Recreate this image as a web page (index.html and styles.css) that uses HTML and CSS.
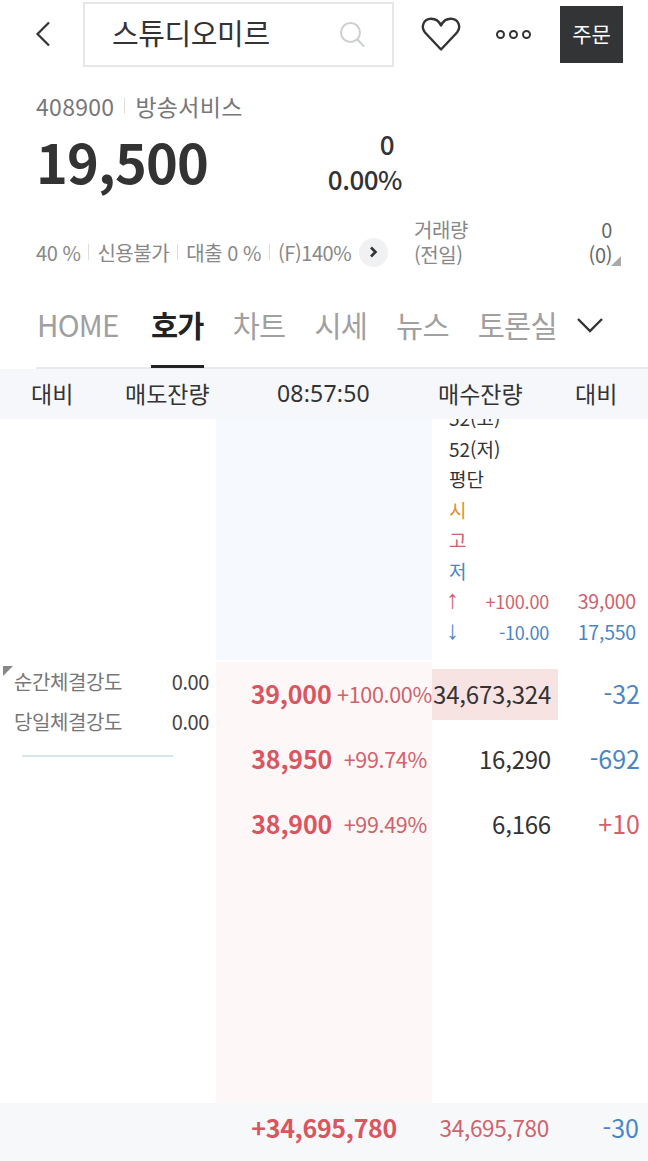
FILE: index.html

```html
<!DOCTYPE html>
<html lang="ko">
<head>
    <meta charset="UTF-8">
    <meta name="viewport" content="width=device-width, initial-scale=1.0">
    <title>스튜디오미르</title>
    <link rel="stylesheet" href="styles.css">
</head>
<body>
    <div class="top-bar">
        <svg class="back-icon" width="16" height="26" viewBox="0 0 16 26"><path d="M14 1.5 2.5 13 14 24.5" fill="none" stroke="#333" stroke-width="2.2"/></svg>
        <div class="search-box">
            <span class="search-name">스튜디오미르</span>
            <svg class="search-icon" width="28" height="28" viewBox="0 0 28 28"><circle cx="12.5" cy="12.5" r="9.5" fill="none" stroke="#ccd0d2" stroke-width="2"/><path d="m19.5 19.5 6.5 7" fill="none" stroke="#ccd0d2" stroke-width="2"/></svg>
        </div>
        <svg class="heart-icon" width="40" height="34" viewBox="0 0 40 34"><path d="M20 32.5 4 15.5C-.5 10 2.500 2 10 1.800c4.500-.1 8 2.400 10 6.700 2-4.300 5.500-6.800 10-6.700 7.500.2 10.500 8.200 6 13.700z" fill="none" stroke="#333" stroke-width="2.400" stroke-linejoin="round"/></svg>
        <div class="more-dots"><span></span><span></span><span></span></div>
        <div class="order-btn">주문</div>
    </div>

    <div class="stock-info">
        <div class="stock-code">408900<i></i>방송서비스</div>
        <div class="price-row">
            <div class="price">19,500</div>
            <div class="change">
                <div class="change-val">0</div>
                <div>0.00%</div>
            </div>
        </div>
        <div class="meta-row">
            <div class="meta-left">
                40 %<i></i>신용불가<i></i>대출 0 %<i></i>(F)140%
                <span class="meta-more"><svg width="9" height="12" viewBox="0 0 9 12"><path d="M2 1.500 6.500 6 2 10.500" fill="none" stroke="#333" stroke-width="2.600"/></svg></span>
            </div>
            <div class="volume">
                <div class="volume-row"><span>거래량</span><span class="volume-val">0</span></div>
                <div class="volume-row"><span>(전일)</span><span class="volume-val">(0)</span></div>
                <b class="volume-mark"></b>
            </div>
        </div>
    </div>

    <div class="tabs">
        <div class="tab tab-home">HOME</div>
        <div class="tab active">호가</div>
        <div class="tab">차트</div>
        <div class="tab">시세</div>
        <div class="tab">뉴스</div>
        <div class="tab">토론실</div>
        <svg class="tabs-more" width="28" height="16" viewBox="0 0 28 16"><path d="M2 2 14 14 26 2" fill="none" stroke="#333" stroke-width="2.400"/></svg>
    </div>

    <div class="book-head">
        <span class="head-a">대비</span>
        <span class="head-b">매도잔량</span>
        <span class="head-c">08:57:50</span>
        <span class="head-d">매수잔량</span>
        <span class="head-e">대비</span>
    </div>

    <div class="book-upper">
        <div></div>
        <div class="upper-mid"></div>
        <div class="upper-right">
            <div class="info-line">52(고)</div>
            <div class="info-line">52(저)</div>
            <div class="info-line">평단</div>
            <div class="info-line orange">시</div>
            <div class="info-line red">고</div>
            <div class="info-line blue">저</div>
            <div class="info-line limit red"><span class="arrow">↑</span><span class="limit-pct">+100.00</span><span class="limit-val">39,000</span></div>
            <div class="info-line limit blue"><span class="arrow">↓</span><span class="limit-pct">-10.00</span><span class="limit-val">17,550</span></div>
        </div>
    </div>

    <div class="book-lower">
        <div class="strength">
            <b class="strength-mark"></b>
            <div class="strength-row"><span>순간체결강도</span><span class="strength-val">0.00</span></div>
            <div class="strength-row"><span>당일체결강도</span><span class="strength-val">0.00</span></div>
            <div class="strength-line"></div>
        </div>
        <div class="lower-mid">
            <div class="price-line"><span class="quote">39,000</span><span class="pct pct-wide">+100.00%</span></div>
            <div class="price-line"><span class="quote">38,950</span><span class="pct">+99.74%</span></div>
            <div class="price-line"><span class="quote">38,900</span><span class="pct">+99.49%</span></div>
        </div>
        <div class="lower-right">
            <div class="qty-line"><span class="qty qty-top">34,673,324</span><span class="diff blue">-32</span></div>
            <div class="qty-line"><span class="qty">16,290</span><span class="diff blue">-692</span></div>
            <div class="qty-line"><span class="qty">6,166</span><span class="diff red">+10</span></div>
        </div>
    </div>

    <div class="book-foot">
        <span class="foot-net">+34,695,780</span>
        <span class="foot-total">34,695,780</span>
        <span class="foot-diff">-30</span>
    </div>
</body>
</html>
```

FILE: styles.css

```css
* {
    margin: 0;
    padding: 0;
    box-sizing: border-box;
    font-family: "Noto Sans CJK KR", "Noto Sans", sans-serif;
}

html, body {
    height: 1161px;
    overflow: hidden;
}

body {
    display: flex;
    flex-direction: column;
    background-color: #fff;
    color: #333;
}

.red { color: #d0626c; }
.blue { color: #4a86c5; }
.orange { color: #e0912f; }

/* top bar */
.top-bar {
    height: 68px;
    display: flex;
    align-items: center;
    padding-left: 35px;
}

.search-box {
    width: 311px;
    height: 65px;
    margin-left: 32px;
    padding: 0 26px 0 27px;
    border: 2px solid #e6e8e8;
    display: flex;
    align-items: center;
    justify-content: space-between;
}

.search-name {
    font-size: 29px;
    line-height: 40px;
    letter-spacing: -0.4px;
    color: #333;
    margin-top: -4px;
}

.heart-icon {
    margin-left: 27px;
}

.more-dots {
    display: flex;
    gap: 4px;
    margin-left: 35px;
}

.more-dots span {
    width: 9px;
    height: 9px;
    border: 2px solid #333;
    border-radius: 50%;
}

.order-btn {
    width: 63px;
    height: 57px;
    margin-left: 29px;
    padding-bottom: 3px;
    background-color: #333436;
    color: #fff;
    font-size: 21px;
    display: flex;
    align-items: center;
    justify-content: center;
}

/* stock info */
.stock-info {
    padding-left: 36px;
    height: 227px;
}

.stock-code {
    height: 38px;
    margin-top: 17px;
    padding-top: 3px;
    font-size: 23px;
    line-height: 30px;
    letter-spacing: 0.3px;
    color: #777;
    display: flex;
    align-items: center;
}

.stock-code i {
    width: 1px;
    height: 16px;
    margin: 0 10px;
    background-color: #ddd;
}

.meta-left i {
    width: 1px;
    height: 16px;
    margin: 0 8px;
    background-color: #ddd;
}

.price-row {
    height: 80px;
    margin-top: -3px;
    display: flex;
    align-items: flex-start;
}

.price {
    width: 290px;
    font-size: 54px;
    font-weight: 700;
    line-height: 72px;
    letter-spacing: -0.8px;
    margin-top: 5px;
}

.change {
    width: 78px;
    text-align: right;
    font-size: 26px;
    font-weight: 500;
    line-height: 35px;
    letter-spacing: -0.5px;
    margin-left: -2px;
    margin-top: 6px;
    white-space: nowrap;
}

.change-val {
    padding-right: 8px;
}

.meta-row {
    display: flex;
    margin-top: 16px;
}

.meta-left {
    width: 378px;
    height: 48px;
    font-size: 20px;
    letter-spacing: -0.45px;
    color: #888;
    display: flex;
    align-items: center;
    padding-top: 24px;
    white-space: nowrap;
}

.meta-more {
    width: 29px;
    height: 29px;
    margin-left: 8px;
    border-radius: 50%;
    background-color: #f0f1f3;
    display: flex;
    align-items: center;
    justify-content: center;
}

.volume {
    width: 198px;
    position: relative;
    top: 1px;
    font-size: 20px;
    line-height: 25px;
    letter-spacing: -0.4px;
    color: #888;
}

.volume-row {
    display: flex;
    justify-content: space-between;
}

.volume-val {
    color: #666;
}

.volume-mark {
    position: absolute;
    right: -9px;
    bottom: 1px;
    border-style: solid;
    border-width: 0 0 10px 10px;
    border-color: transparent transparent #aaa transparent;
}

/* tabs */
.tabs {
    height: 74px;
    margin-left: 36px;
    border-bottom: 2px solid #e8e9ea;
    display: flex;
    gap: 29px;
    align-items: center;
    position: relative;
}

.tab {
    height: 74px;
    line-height: 60px;
    font-size: 29.500px;
    letter-spacing: -0.8px;
    color: #a0a0a0;
    position: relative;
    white-space: nowrap;
}

.tab-home {
    width: 86px;
    padding-left: 1px;
    font-weight: 400;
}

.tab.active {
    color: #222;
    font-weight: 700;
}

.tab.active::after {
    content: "";
    position: absolute;
    left: 0;
    right: 0;
    bottom: 0;
    height: 3px;
    background-color: #222;
}

.tabs-more {
    margin: -12px 0 0 -10px;
}

/* order book */
.book-head {
    height: 50px;
    padding-bottom: 2px;
    background-color: #f5f7fa;
    font-size: 23px;
    color: #333;
    display: flex;
    align-items: center;
}

.head-a { width: 125px; padding-left: 31px; }
.head-b { width: 152px; }
.head-c { width: 161px; font-family: "Noto Sans", sans-serif; letter-spacing: 0.2px; }
.head-d { width: 137px; }
.head-e { flex: 1; }

.book-upper {
    height: 241px;
    display: grid;
    grid-template-columns: 216px 216px 216px;
    flex-shrink: 0;
}

.upper-mid {
    background-color: #f6faff;
}

.upper-right {
    height: 241px;
    overflow: hidden;
    padding: 0 12px 13px 17px;
    display: flex;
    flex-direction: column;
    justify-content: flex-end;
}

.info-line {
    flex-shrink: 0;
    height: 30.500px;
    line-height: 30px;
    font-size: 19px;
    display: flex;
}

.arrow {
    width: 18px;
    font-family: "Liberation Sans", sans-serif;
    font-size: 26px;
    line-height: 26px;
    margin-left: -3px;
    margin-right: 3px;
}

.limit-pct {
    width: 82px;
    font-size: 18px;
    letter-spacing: -0.2px;
    text-align: right;
}

.limit-val {
    flex: 1;
    font-size: 19.500px;
    letter-spacing: -0.2px;
    text-align: right;
}

.book-lower {
    margin-top: 2px;
    height: 441px;
    display: grid;
    grid-template-columns: 216px 216px 216px;
    flex-shrink: 0;
}

.strength {
    position: relative;
    padding: 1px 7px 0 14px;
    font-size: 20px;
    color: #777;
    letter-spacing: -0.4px;
}

.strength-row {
    height: 40px;
    line-height: 38px;
    display: flex;
    justify-content: space-between;
}

.strength-val {
    color: #444;
}

.strength-mark {
    position: absolute;
    left: 3px;
    top: 4px;
    border-style: solid;
    border-width: 10px 10px 0 0;
    border-color: #888 transparent transparent transparent;
}

.strength-line {
    width: 151px;
    height: 2px;
    margin: 12px 0 0 8px;
    background-color: #d3e5ee;
}

.lower-mid {
    background-color: #fef7f7;
}

.price-line,
.qty-line {
    height: 65px;
    display: flex;
    align-items: center;
}

.price-line {
    padding-bottom: 3px;
}

.quote {
    width: 116px;
    text-align: right;
    font-size: 25px;
    font-weight: 700;
    letter-spacing: -0.2px;
    color: #d9555f;
}

.pct {
    width: 95px;
    text-align: right;
    font-size: 21.500px;
    letter-spacing: -0.3px;
    color: #d0626c;
}

.pct-wide {
    width: 101px;
    white-space: nowrap;
}

.qty {
    width: 126px;
    height: 51px;
    line-height: 50px;
    padding-right: 7px;
    text-align: right;
    font-size: 24px;
    letter-spacing: -0.2px;
    white-space: nowrap;
}

.qty-top {
    background-color: #f8e3e3;
}

.diff {
    flex: 1;
    padding: 0 8px 3px 0;
    text-align: right;
    font-size: 25px;
}

.book-foot {
    flex: 1;
    background-color: #f6f8fa;
    display: flex;
    align-items: center;
    padding-bottom: 11px;
}

.foot-net {
    width: 397px;
    text-align: right;
    font-size: 25px;
    font-weight: 700;
    letter-spacing: -0.300px;
    color: #d9555f;
}

.foot-total {
    width: 152px;
    text-align: right;
    font-size: 22.500px;
    letter-spacing: -0.3px;
    color: #d0626c;
}

.foot-diff {
    width: 90px;
    text-align: right;
    font-size: 25px;
    color: #4a86c5;
}
```
